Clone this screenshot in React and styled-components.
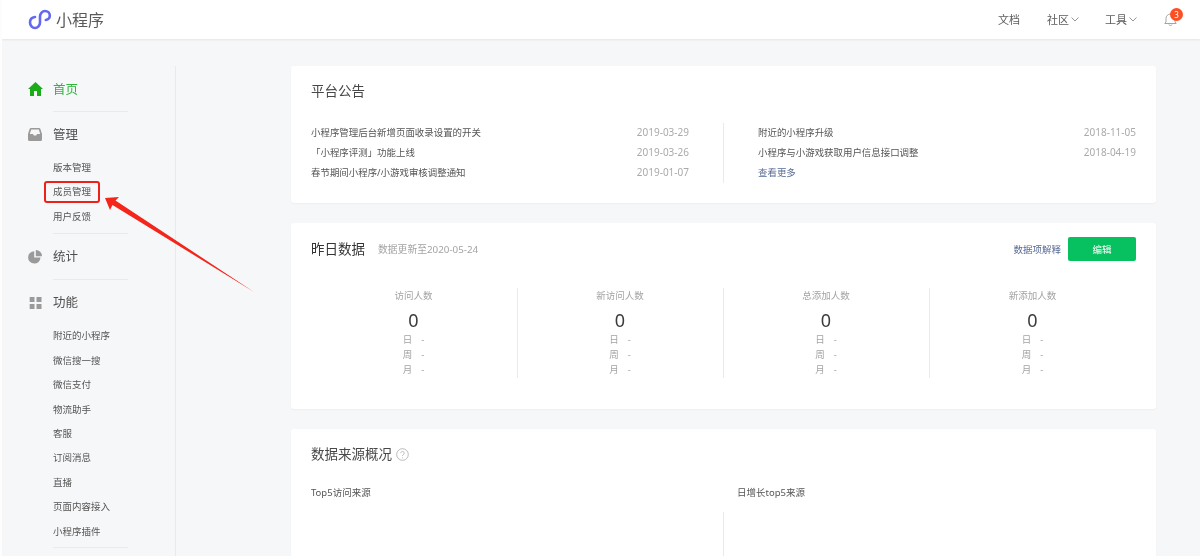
import React from 'react';
import styled, { createGlobalStyle } from 'styled-components';

const Global = createGlobalStyle`
  html, body { margin: 0; padding: 0; background: #f6f7f9; }
  body { font-family: "Noto Sans", "Noto Sans CJK SC", sans-serif; color: #353535; }
  * { box-sizing: border-box; }
`;
const Page = styled.div`
  position: relative; width: 1200px; height: 556px; overflow: hidden;
  background: #f6f7f9; border-left: 2px solid #fdfdfd; filter: blur(.3px);
`;
const Header = styled.header`
  height: 39px; background: #fff; box-shadow: 0 1px 2px rgba(0,0,0,.08);
  display: flex; align-items: center; padding: 0 15px 0 26px; position: relative;
`;
const Brand = styled.div`display: flex; align-items: center; gap: 4px; flex: 1;`;
const BrandName = styled.span`font-size: 16px; color: #5a5a5a; line-height: 22px;`;
const TopNav = styled.nav`display: flex; align-items: center; font-size: 11px; color: #5c5c5c;`;
const TopItem = styled.span`
  display: flex; align-items: center; gap: 2px; margin-left: ${p => p.$gap}px; line-height: 16px;
`;
const Bell = styled.span`position: relative; display: block; width: 13px; height: 14px; margin-left: 27px; margin-top: -1px; margin-right: 8px;`;
const Badge = styled.span`
  position: absolute; left: 6px; top: -4px; width: 13px; height: 13px; border-radius: 50%;
  background: #fa5024; color: #fff; font-size: 8px; line-height: 13px; text-align: center;
`;
const Body = styled.div`display: flex; align-items: flex-start;`;
const Side = styled.aside`
  width: 174px; height: 490px; margin-top: 27px; border-right: 1px solid #e9eaec; padding: 0 0 0 26px; flex: none;
`;
const Group = styled.div`
  width: 100px; padding-top: ${p => p.$top}px;
  &::after { content: ''; display: block; width: 75px; height: 1px; background: #e9eaec; margin: ${p => p.$gap}px 0 0 25px; }
`;
const MainLink = styled.div`
  display: flex; align-items: center; height: 24px; font-size: 12.5px; line-height: 24px;
  color: ${p => p.$active ? '#2fb53a' : '#4f4f4f'};
`;
const MainLabel = styled.span`padding-top: 1px;`;
const IconSlot = styled.span`display: flex; width: 25px; flex: none; align-items: center;`;
const SubList = styled.div`padding: ${p => p.$top}px 0 0 25px;`;
const SubLink = styled.div`height: 24.4px; line-height: 24.4px; font-size: 9.5px; color: #555; white-space: nowrap;`;
const Content = styled.main`
  width: 865px; margin-left: 115px; margin-top: 27px; display: flex; flex-direction: column; gap: 20px; flex: none;
`;
const Card = styled.section`
  background: #fff; border-radius: 3px; box-shadow: 0 1px 2px rgba(0,0,0,.04); padding: 0 20px;
  height: ${p => p.$h}px; flex: none;
`;
const TitleRow = styled.div`display: flex; align-items: center; height: 24px; margin-top: ${p => p.$top}px;`;
const Title = styled.h2`margin: 0; font-size: 13.5px; font-weight: 400; line-height: 24px; color: ${p => p.$dark ? '#353535' : '#484848'};`;
const TitleNote = styled.span`font-size: 9.8px; color: #a3a3a3; margin-left: 13px; flex: 1;`;
const NoteLink = styled.a`font-size: 9.5px; color: #576b95; margin-right: 7px;`;
const Primary = styled.button`
  width: 68px; height: 24px; border: 0; border-radius: 2px; background: #07c160; color: #fff;
  font: inherit; font-size: 9.5px; padding: 0;
`;
const Notices = styled.div`display: grid; grid-template-columns: 413px 1fr; margin-top: 20px;`;
const NoticeCol = styled.div`
  padding: 0 ${p => p.$left ? '34px' : '0'} 0 ${p => p.$left ? '0' : '34px'};
  ${p => p.$left && 'border-right: 1px solid #e9eaec;'}
  height: 60px;
`;
const Notice = styled.div`display: flex; justify-content: space-between; height: 20.2px; line-height: 19px; font-size: 9.45px; color: #555;`;
const NoticeDate = styled.span`color: #aaa; font-size: 10px;`;
const MoreLink = styled.a`color: #576b95;`;
const Stats = styled.div`display: grid; grid-template-columns: 207px repeat(3, 206px); margin-top: 27px;`;
const Stat = styled.div`
  height: 90px; display: flex; flex-direction: column; align-items: center; padding-right: 1px;
  ${p => !p.$last && 'border-right: 1px solid #e9eaec;'}
`;
const StatLabel = styled.div`font-size: 9.5px; color: #a3a3a3; line-height: 16px;`;
const StatValue = styled.div`font-size: 18px; color: #3c3c3c; line-height: 24px; margin-top: 4px;`;
const StatRow = styled.div`
  display: flex; justify-content: center; gap: 9px; font-size: 9.5px; color: #a3a3a3; line-height: 15px; width: 22px;
  white-space: nowrap;
`;
const StatList = styled.div`margin-top: 0;`;
const Sources = styled.div`display: grid; grid-template-columns: 413px 1fr; margin-top: 19px;`;
const SourceHead = styled.div`font-size: 9.5px; color: #555; line-height: 16px; padding-left: ${p => p.$pad}px;`;
const SourceBody = styled.div`
  height: 60px; margin-top: 11px; ${p => p.$line && 'border-right: 1px solid #e9eaec;'}
`;
const Highlight = styled.div`
  position: absolute; left: 42px; top: 181px; width: 56px; height: 22px;
  border: 2.5px solid #ef1f1a; border-radius: 3px;
`;
const Arrow = styled.svg`position: absolute; left: -2px; top: 0; pointer-events: none;`;

const Home = () => <svg width="15" height="14" viewBox="0 0 15 14"><path fill="#1aad19" d="M7.5 0 15 7h-2v7H9V9H6v5H2V7H0z"/></svg>;
const Inbox = () => <svg width="14" height="13" viewBox="0 0 14 13"><path fill="#9a9a9a" d="M3 0h8a1.5 1.5 0 0 1 1.4 1L14 6v5.5a1.5 1.5 0 0 1-1.5 1.5h-11A1.5 1.5 0 0 1 0 11.500V6l1.600-5A1.500 1.500 0 0 1 3 0Zm.2 1.500L1.800 6H5l.8 1.500h2.400L9 6h3.200l-1.400-4.500Z" fillRule="evenodd"/></svg>;
const Pie = () => <svg width="14" height="14" viewBox="0 0 14 14"><path fill="#9a9a9a" d="M6.200 1.200V7.600h6.300A6.200 6.200 0 1 1 6.200 1.200Z"/><path fill="#9a9a9a" d="M7.800 0A6.200 6.200 0 0 1 14 6.200H7.800Z"/></svg>;
const Grid = () => <svg width="14" height="12" viewBox="0 0 14 12"><path fill="#9a9a9a" d="M1.700 0h4.800v5H1.700zM8.500 0h5v5h-5zM1.700 7h4.800v5H1.700zM8.500 7h5v5h-5z"/></svg>;
const Logo = () => (
  <svg width="24" height="22" viewBox="0 0 24 22" fill="none">
    <path stroke="#6467f0" strokeWidth="2.600" strokeLinecap="round" d="M7 8C3.800 8.400 2 10.500 2 13.500C2 16.500 4.300 19 7 19C9.700 19 12 16.500 12 13.500V7.500C12 4.300 14.400 2 17 2C19.700 2 21.800 4 21.800 6.500C21.800 9 20 10.600 17.800 11"/>
  </svg>
);
const Chevron = () => <svg width="8" height="5" viewBox="0 0 8 5" fill="none"><path d="M.5.500 4 4 7.500.500" stroke="#8a8a8a" strokeWidth=".9"/></svg>;
const BellIcon = () => <svg width="13" height="14" viewBox="0 0 13 14" fill="none"><path d="M2 10V6.500a4.500 4.500 0 0 1 9 0V10l1.200 1.500H.8ZM5 12.500a1.600 1.600 0 0 0 3 0" stroke="#9a9a9a" strokeWidth=".9" strokeLinejoin="round"/></svg>;
const Help = () => <svg width="13" height="13" viewBox="0 0 13 13" fill="none" style={{ marginLeft: 4 }}><circle cx="6.500" cy="6.500" r="5.800" stroke="#aaa" strokeWidth=".8"/><path d="M4.800 5.200a1.700 1.700 0 1 1 2.600 1.400c-.6.400-.9.700-.9 1.400" stroke="#aaa" strokeWidth=".8"/><circle cx="6.500" cy="9.700" r=".5" fill="#aaa"/></svg>;

const manage = ['版本管理', '成员管理', '用户反馈'];
const features = ['附近的小程序', '微信搜一搜', '微信支付', '物流助手', '客服', '订阅消息', '直播', '页面内容接入', '小程序插件'];
const stats = ['访问人数', '新访问人数', '总添加人数', '新添加人数'];

export default function App() {
  return (
    <Page>
      <Global />
      <Header>
        <Brand><Logo /><BrandName>小程序</BrandName></Brand>
        <TopNav>
          <TopItem $gap={0}>文档</TopItem>
          <TopItem $gap={27}>社区<Chevron /></TopItem>
          <TopItem $gap={26}>工具<Chevron /></TopItem>
          <Bell><BellIcon /><Badge>3</Badge></Bell>
        </TopNav>
      </Header>
      <Body>
        <Side>
          <Group $top={11} $gap={10}>
            <MainLink $active><IconSlot><Home /></IconSlot><MainLabel>首页</MainLabel></MainLink>
          </Group>
          <Group $top={10} $gap={3.8}>
            <MainLink><IconSlot><Inbox /></IconSlot><MainLabel>管理</MainLabel></MainLink>
            <SubList $top={10}>{manage.map(t => <SubLink key={t}>{t}</SubLink>)}</SubList>
          </Group>
          <Group $top={11} $gap={10}>
            <MainLink><IconSlot><Pie /></IconSlot><MainLabel>统计</MainLabel></MainLink>
          </Group>
          <Group $top={11} $gap={3.5}>
            <MainLink><IconSlot><Grid /></IconSlot><MainLabel>功能</MainLabel></MainLink>
            <SubList $top={9.5}>{features.map(t => <SubLink key={t}>{t}</SubLink>)}</SubList>
          </Group>
        </Side>
        <Content>
          <Card $h={137}>
            <TitleRow $top={13}><Title>平台公告</Title></TitleRow>
            <Notices>
              <NoticeCol $left>
                <Notice>小程序管理后台新增页面收录设置的开关<NoticeDate>2019-03-29</NoticeDate></Notice>
                <Notice>「小程序评测」功能上线<NoticeDate>2019-03-26</NoticeDate></Notice>
                <Notice>春节期间小程序/小游戏审核调整通知<NoticeDate>2019-01-07</NoticeDate></Notice>
              </NoticeCol>
              <NoticeCol>
                <Notice>附近的小程序升级<NoticeDate>2018-11-05</NoticeDate></Notice>
                <Notice>小程序与小游戏获取用户信息接口调整<NoticeDate>2018-04-19</NoticeDate></Notice>
                <Notice><MoreLink>查看更多</MoreLink></Notice>
              </NoticeCol>
            </Notices>
          </Card>
          <Card $h={186}>
            <TitleRow $top={14}>
              <Title $dark>昨日数据</Title>
              <TitleNote>数据更新至2020-05-24</TitleNote>
              <NoteLink>数据项解释</NoteLink>
              <Primary>编辑</Primary>
            </TitleRow>
            <Stats>
              {stats.map((s, i) => (
                <Stat key={s} $last={i === 3}>
                  <StatLabel>{s}</StatLabel>
                  <StatValue>0</StatValue>
                  <StatList>
                    {['日', '周', '月'].map(d => <StatRow key={d}><span>{d}</span><span>-</span></StatRow>)}
                  </StatList>
                </Stat>
              ))}
            </Stats>
          </Card>
          <Card $h={180}>
            <TitleRow $top={13}><Title>数据来源概况</Title><Help /></TitleRow>
            <Sources>
              <div>
                <SourceHead $pad={0}>Top5访问来源</SourceHead>
                <SourceBody $line />
              </div>
              <div>
                <SourceHead $pad={13}>日增长top5来源</SourceHead>
              </div>
            </Sources>
          </Card>
        </Content>
      </Body>
      <Highlight />
      <Arrow width="300" height="300" viewBox="0 0 300 300">
        <polygon fill="#f4261c" points="105,198 119,197 115.500,200.500 254,292 112.500,205 110,210" />
      </Arrow>
    </Page>
  );
}
